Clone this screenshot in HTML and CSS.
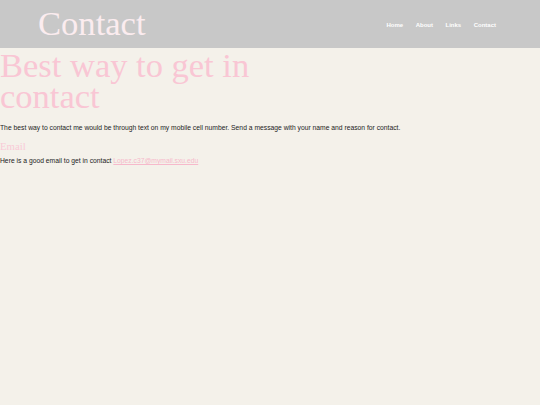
FILE: index.html
```html
<!DOCTYPE html>
<html lang="en">
<head>
<meta charset="utf-8">
<title>Contact</title>
<link rel="stylesheet" href="styles.css">
</head>
<body>
<header class="site-header">
  <div class="site-title">Contact</div>
  <nav class="site-nav">
    <a href="#">Home</a>
    <a href="#">About</a>
    <a href="#">Links</a>
    <a href="#">Contact</a>
  </nav>
</header>
<main class="content">
  <h1 class="page-heading">Best way to get in contact</h1>
  <p class="text">The best way to contact me would be through text on my mobile cell number. Send a message with your name and reason for contact.</p>
  <h2 class="sub-heading">Email</h2>
  <p class="text text-email">Here is a good email to get in contact <a class="mail" href="#">Lopez.c37@mymail.sxu.edu</a></p>
</main>
</body>
</html>
```
FILE: styles.css
```css
html, body {
  margin: 0;
  padding: 0;
}
body {
  background: #f4f1ea;
  font-family: "Liberation Sans", Arial, sans-serif;
  color: #1c1c1c;
  width: 540px;
  height: 405px;
}
.site-header {
  display: flex;
  justify-content: space-between;
  align-items: center;
  height: 48px;
  background: #c8c8c8;
  padding: 0 44px 0 38px;
  box-sizing: border-box;
}
.site-title {
  font-family: "Liberation Serif", "Times New Roman", serif;
  font-size: 34.6px;
  color: #fbecef;
  line-height: 1;
  margin-top: -1px;
}
.site-nav {
  display: flex;
  gap: 12.5px;
  margin-top: 1px;
}
.site-nav a {
  color: #ffffff;
  font-weight: bold;
  font-size: 6px;
  text-decoration: none;
}
.content {
  padding-top: 2px;
}
.page-heading {
  font-family: "Liberation Serif", "Times New Roman", serif;
  font-weight: normal;
  font-size: 34.5px;
  line-height: 31px;
  color: #f9c6d4;
  width: 270px;
  margin: 0 0 12px 0;
}
.text {
  font-size: 6.75px;
  line-height: 8px;
  margin: 0;
}
.sub-heading {
  font-family: "Liberation Serif", "Times New Roman", serif;
  font-weight: normal;
  font-size: 10.75px;
  line-height: 13px;
  color: #f9cbd7;
  margin: 8px 0 4px 0;
}
.mail {
  color: #f6b9cb;
}
```
